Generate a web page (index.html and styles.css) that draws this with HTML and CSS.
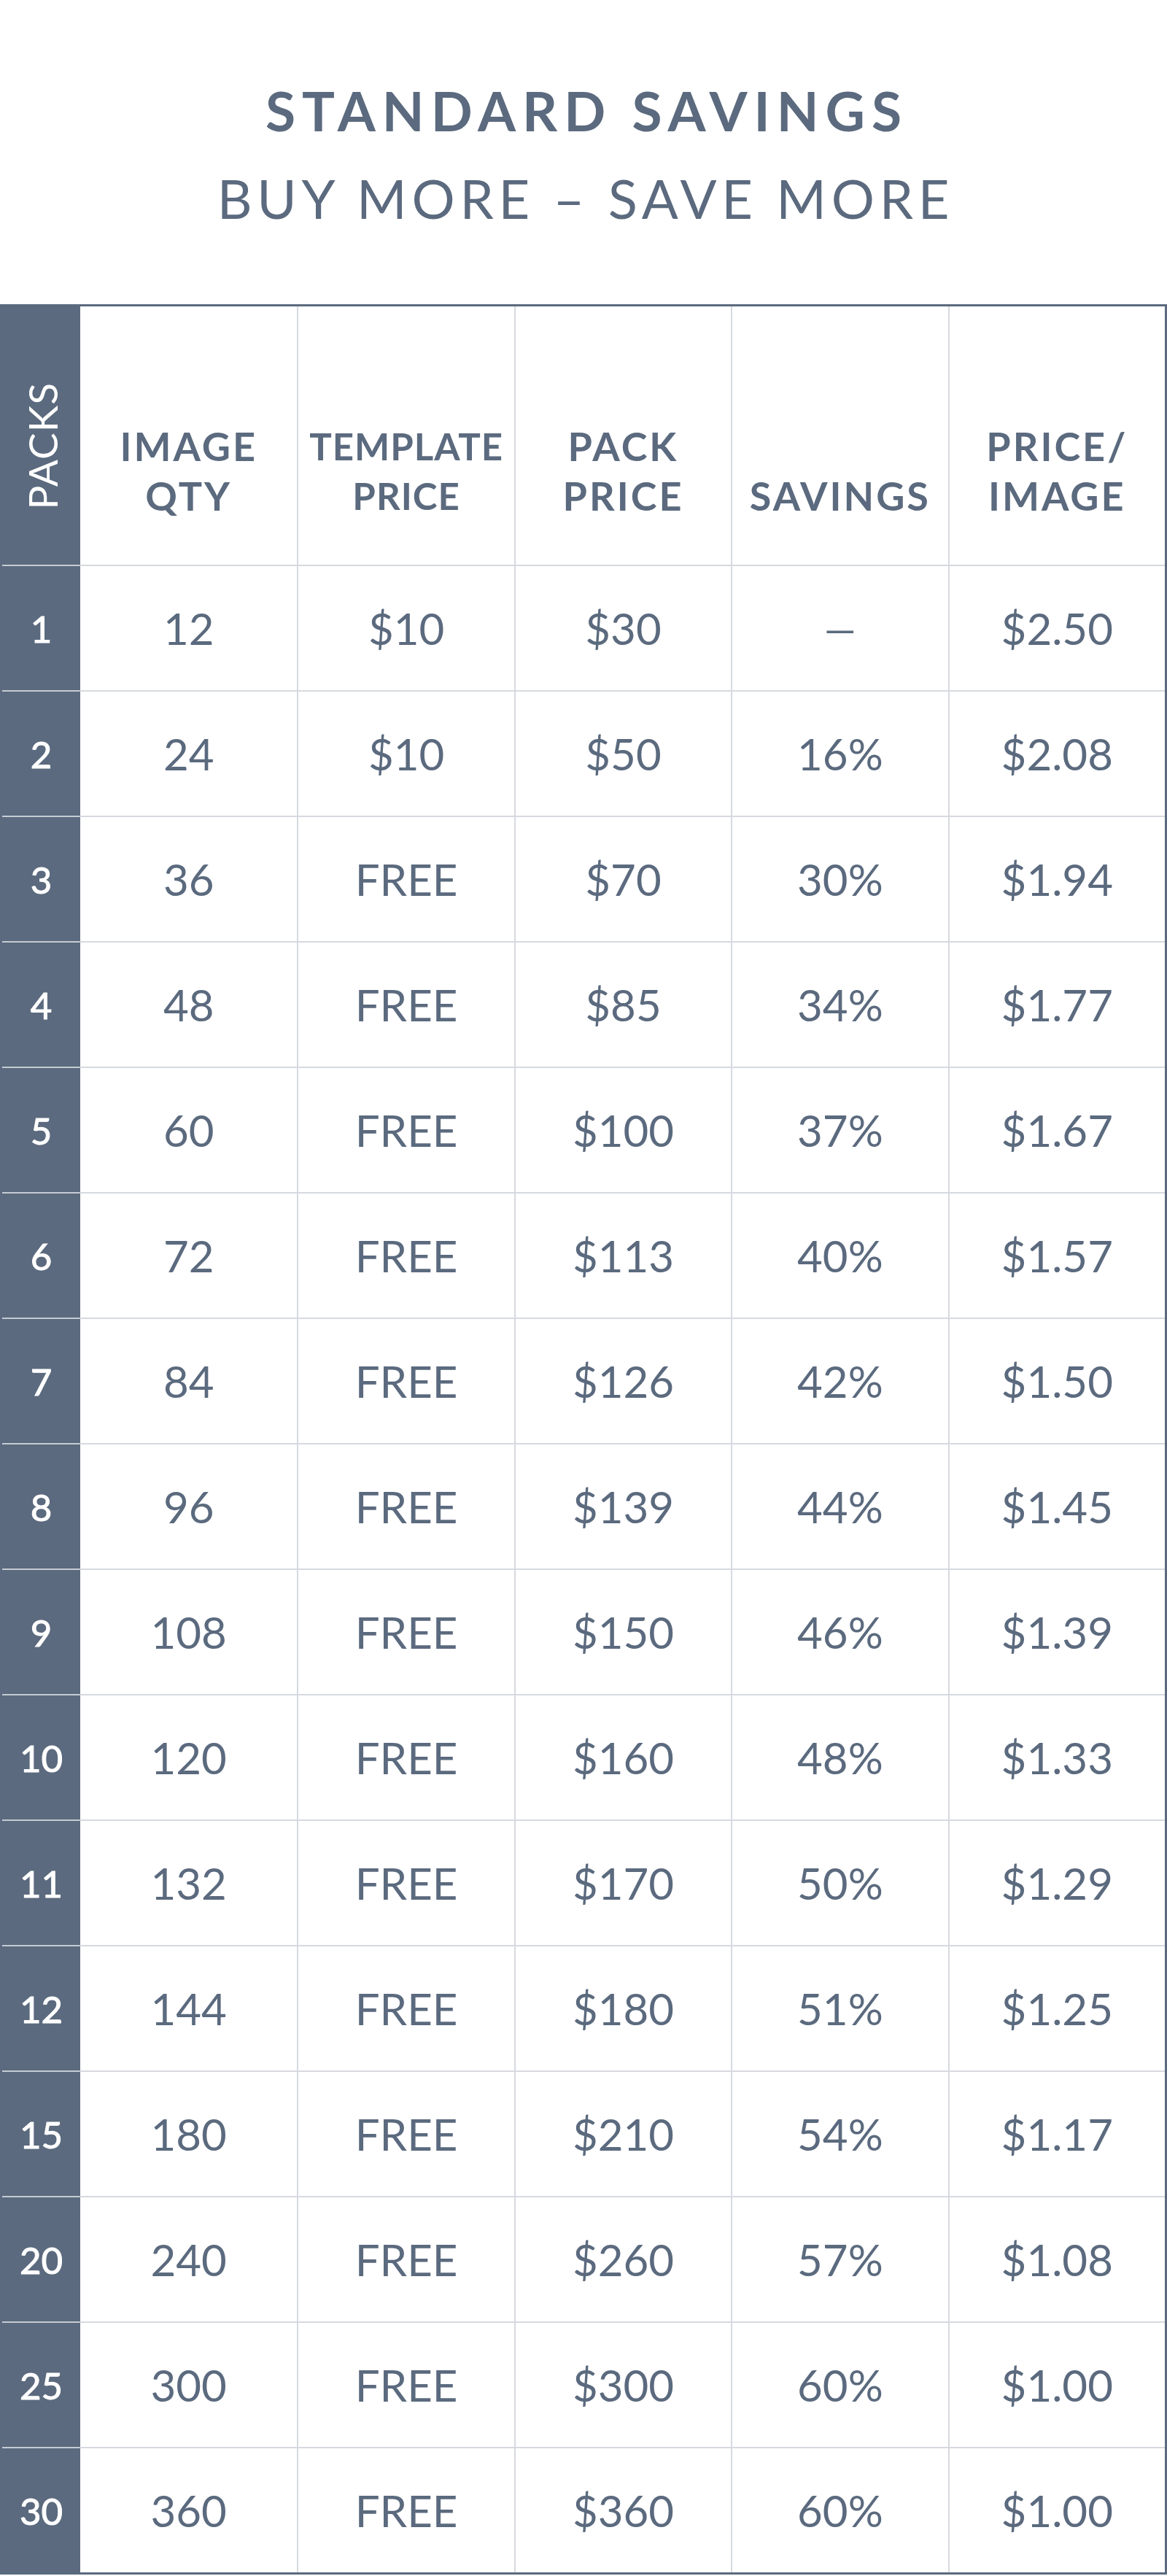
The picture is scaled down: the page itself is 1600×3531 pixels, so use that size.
FILE: index.html
```html
<!DOCTYPE html>
<html lang="en">
<head>
<meta charset="utf-8">
<title>Standard Savings</title>
<link rel="stylesheet" href="styles.css">
</head>
<body>
<main class="page">
  <header class="intro">
    <h1 class="title">STANDARD SAVINGS</h1>
    <p class="subtitle">BUY MORE – SAVE MORE</p>
  </header>
  <section class="pricing">
    <div class="row head">
      <div class="cell packs-head"><span class="vertical">PACKS</span></div>
      <div class="cell th"><span>IMAGE<br>QTY</span></div>
      <div class="cell th th-tight"><span>TEMPLATE<br>PRICE</span></div>
      <div class="cell th"><span>PACK<br>PRICE</span></div>
      <div class="cell th"><span>SAVINGS</span></div>
      <div class="cell th"><span>PRICE/<br>IMAGE</span></div>
    </div>
    <div class="row"><div class="cell num">1</div><div class="cell">12</div><div class="cell">$10</div><div class="cell">$30</div><div class="cell dash">—</div><div class="cell">$2.50</div></div>
    <div class="row"><div class="cell num">2</div><div class="cell">24</div><div class="cell">$10</div><div class="cell">$50</div><div class="cell">16%</div><div class="cell">$2.08</div></div>
    <div class="row"><div class="cell num">3</div><div class="cell">36</div><div class="cell">FREE</div><div class="cell">$70</div><div class="cell">30%</div><div class="cell">$1.94</div></div>
    <div class="row"><div class="cell num">4</div><div class="cell">48</div><div class="cell">FREE</div><div class="cell">$85</div><div class="cell">34%</div><div class="cell">$1.77</div></div>
    <div class="row"><div class="cell num">5</div><div class="cell">60</div><div class="cell">FREE</div><div class="cell">$100</div><div class="cell">37%</div><div class="cell">$1.67</div></div>
    <div class="row"><div class="cell num">6</div><div class="cell">72</div><div class="cell">FREE</div><div class="cell">$113</div><div class="cell">40%</div><div class="cell">$1.57</div></div>
    <div class="row"><div class="cell num">7</div><div class="cell">84</div><div class="cell">FREE</div><div class="cell">$126</div><div class="cell">42%</div><div class="cell">$1.50</div></div>
    <div class="row"><div class="cell num">8</div><div class="cell">96</div><div class="cell">FREE</div><div class="cell">$139</div><div class="cell">44%</div><div class="cell">$1.45</div></div>
    <div class="row"><div class="cell num">9</div><div class="cell">108</div><div class="cell">FREE</div><div class="cell">$150</div><div class="cell">46%</div><div class="cell">$1.39</div></div>
    <div class="row"><div class="cell num">10</div><div class="cell">120</div><div class="cell">FREE</div><div class="cell">$160</div><div class="cell">48%</div><div class="cell">$1.33</div></div>
    <div class="row"><div class="cell num">11</div><div class="cell">132</div><div class="cell">FREE</div><div class="cell">$170</div><div class="cell">50%</div><div class="cell">$1.29</div></div>
    <div class="row"><div class="cell num">12</div><div class="cell">144</div><div class="cell">FREE</div><div class="cell">$180</div><div class="cell">51%</div><div class="cell">$1.25</div></div>
    <div class="row"><div class="cell num">15</div><div class="cell">180</div><div class="cell">FREE</div><div class="cell">$210</div><div class="cell">54%</div><div class="cell">$1.17</div></div>
    <div class="row"><div class="cell num">20</div><div class="cell">240</div><div class="cell">FREE</div><div class="cell">$260</div><div class="cell">57%</div><div class="cell">$1.08</div></div>
    <div class="row"><div class="cell num">25</div><div class="cell">300</div><div class="cell">FREE</div><div class="cell">$300</div><div class="cell">60%</div><div class="cell">$1.00</div></div>
    <div class="row"><div class="cell num">30</div><div class="cell">360</div><div class="cell">FREE</div><div class="cell">$360</div><div class="cell">60%</div><div class="cell">$1.00</div></div>
  </section>
</main>
</body>
</html>
```
FILE: styles.css
```css
html, body {
  margin: 0;
  padding: 0;
  background: #ffffff;
}

body {
  font-family: "Lato", "Open Sans", "Liberation Sans", sans-serif;
  color: #5b6a7e;
}

.page {
  width: 1600px;
}

.intro {
  height: 417px;
  box-sizing: border-box;
  padding-top: 106px;
  text-align: center;
}

.title {
  margin: 0;
  font-size: 75px;
  line-height: 90px;
  font-weight: 700;
  letter-spacing: 9px;
  padding-left: 9px;
}

.subtitle {
  margin: 31px 0 0;
  font-size: 74px;
  line-height: 90px;
  font-weight: 400;
  letter-spacing: 6.7px;
  padding-left: 6px;
}

.pricing {
  border: 3px solid #5b6a7e;
}

.row {
  display: grid;
  grid-template-columns: 107px repeat(5, 1fr);
  height: 172px;
}

.row.head {
  height: 354px;
}

.cell {
  display: flex;
  align-items: center;
  justify-content: center;
  box-sizing: border-box;
  border-top: 2px solid #d6d9df;
  font-size: 60px;
  line-height: 1;
  font-weight: 400;
  text-align: center;
}

.cell + .cell + .cell {
  border-left: 2px solid #d6d9df;
}

.head .cell {
  border-top: 0;
}

.dash {
  font-size: 55px;
}

.num {
  background: #5b6a7e;
  color: #ffffff;
  font-weight: 400;
  font-size: 51px;
  -webkit-text-stroke: 1px #ffffff;
  border-top-color: #c6cbd3;
}

.packs-head {
  background: #5b6a7e;
  align-items: flex-end;
  padding-bottom: 75px;
  padding-left: 4px;
}

.vertical {
  writing-mode: vertical-rl;
  transform: rotate(180deg);
  color: #ffffff;
  font-size: 55px;
  line-height: 1;
  letter-spacing: 1px;
  font-weight: 400;
}

.th {
  align-items: flex-end;
  padding-bottom: 60px;
  font-size: 54px;
  line-height: 68px;
  font-weight: 700;
  letter-spacing: 3px;
}

.th-tight {
  font-size: 51px;
  letter-spacing: 1px;
}
```
